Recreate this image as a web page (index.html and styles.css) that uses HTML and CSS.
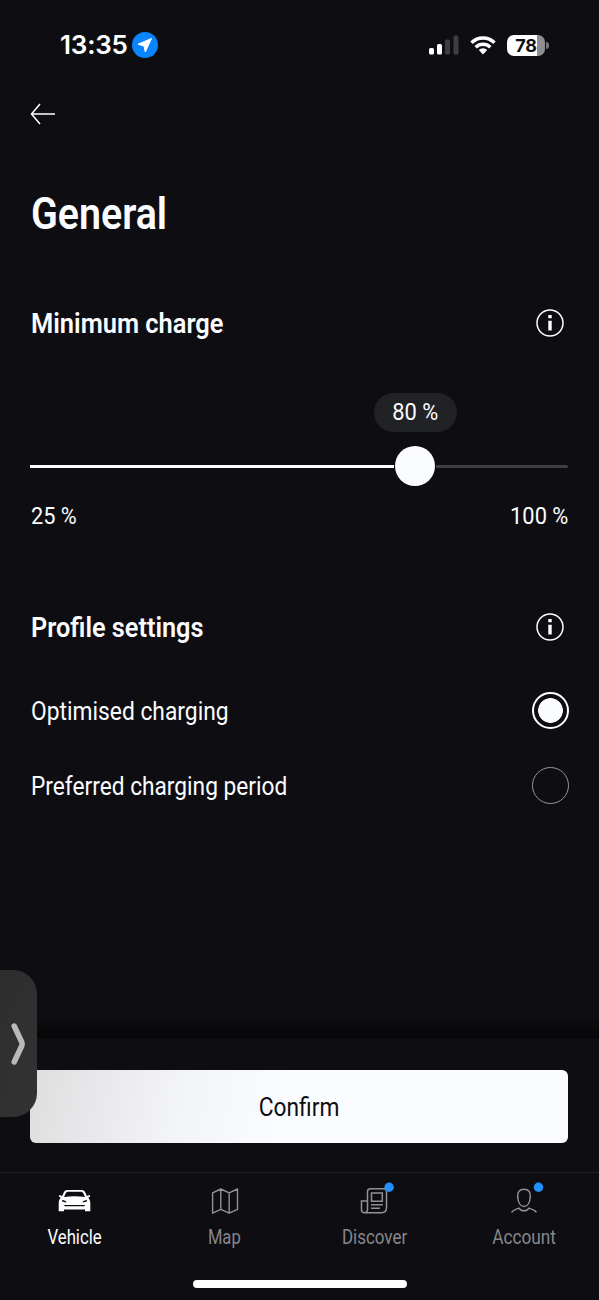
FILE: index.html
```html
<!DOCTYPE html>
<html lang="en">
<head>
<meta charset="utf-8">
<title>General</title>
<link rel="stylesheet" href="styles.css">
</head>
<body>
<div class="screen">
  <header class="status">
    <div class="status-left">
      <span class="time">13:35</span>
      <svg class="location" viewBox="0 0 26 26"><circle cx="13" cy="13" r="13" fill="#0a84ff"/><path d="M19.500 6.500 6 12.200 12 14 13.300 20Z" fill="#fff" stroke="#fff" stroke-width="1" stroke-linejoin="round"/></svg>
    </div>
    <div class="status-right">
      <svg class="signal" viewBox="0 0 30 20"><rect y="13" width="5" height="6.5" rx="1.5" fill="#fff"/><rect x="8" y="9" width="5" height="10.5" rx="1.5" fill="#fff"/><rect x="16" y="4.500" width="5" height="15" rx="1.500" fill="#3e3e42"/><rect x="24.500" y="0.500" width="5" height="19" rx="1.500" fill="#3e3e42"/></svg>
      <svg class="wifi" viewBox="0 0 26 20"><g fill="none" stroke="#fff" stroke-width="3.500"><path d="M1.500 7.700a16.300 16.300 0 0 1 23 0"/><path d="M5.700 12.200a10.400 10.400 0 0 1 14.600 0"/></g><path d="M8.800 15a6 6 0 0 1 8.400 0L13 19.500Z" fill="#fff"/></svg>
      <div class="battery"><span class="level">78</span><i class="nub"></i></div>
    </div>
  </header>

  <nav class="topbar">
    <svg class="back" viewBox="0 0 26 22" fill="none" stroke="#fff" stroke-width="1.500"><path d="M25 11H1.500M10 1 1.500 11 10 21"/></svg>
  </nav>

  <main class="content">
    <h1 class="title"><span class="t t-title">General</span></h1>

    <section class="row heading-row charge-heading">
      <h2 class="heading"><span class="t t-min">Minimum charge</span></h2>
      <svg class="info" viewBox="0 0 28 28"><circle cx="14" cy="14" r="13" fill="none" stroke="#fff" stroke-width="1.500"/><path d="M12.300 6h3.400v3.200h-3.400zM12.300 11.700h3.400v9.800h-3.400z" fill="#fff"/></svg>
    </section>

    <section class="slider">
      <div class="bubble"><span class="t t-80">80 %</span></div>
      <div class="track"><div class="fill"></div><div class="thumb"></div><div class="rest"></div></div>
      <div class="row scale"><span class="t t-25">25 %</span><span class="t t-100">100 %</span></div>
    </section>

    <section class="row heading-row profile-heading">
      <h2 class="heading"><span class="t t-profile">Profile settings</span></h2>
      <svg class="info" viewBox="0 0 28 28"><circle cx="14" cy="14" r="13" fill="none" stroke="#fff" stroke-width="1.500"/><path d="M12.300 6h3.400v3.200h-3.400zM12.300 11.700h3.400v9.800h-3.400z" fill="#fff"/></svg>
    </section>

    <div class="row option"><span class="t t-opt">Optimised charging</span><i class="radio checked"></i></div>
    <div class="row option"><span class="t t-pref">Preferred charging period</span><i class="radio"></i></div>
  </main>

  <footer class="actions"><button class="confirm"><span class="t t-confirm">Confirm</span></button></footer>

  <nav class="tabs">
    <a class="tab active">
      <svg class="tab-icon" viewBox="0 0 36 30"><path fill="#fff" fill-rule="evenodd" d="M10.500 4h14c2 0 3 .8 3.800 2.500l1.600 3.500 2.500-1 1 1.300-2.100 1.400c1.400 1.500 2 3 2 5.500V25.300h-5.300v-1.700H7V25.300H1.700v-8.100c0-2.500.6-4 2-5.500L1.600 10.300 2.600 9l2.500 1 1.600-3.500C7.500 4.800 8.500 4 10.500 4Zm.6 1.700c-1.300 0-1.900.5-2.500 1.700L7 11q10.500-1.400 21 0l-1.600-3.600c-.6-1.200-1.200-1.700-2.500-1.700ZM4.800 13.700l.8 2 4 .8-.9-1.500Zm25.400 0-3.900 1.300-.9 1.500 4-.8ZM6.500 18.900l1.500 1.400h19l1.500-1.400Z"/></svg>
      <span class="t t-vehicle">Vehicle</span>
    </a>
    <a class="tab">
      <svg class="tab-icon" viewBox="0 0 36 30" fill="none" stroke="#929296" stroke-width="1.400" stroke-linejoin="round"><path d="m5.600 6.800 8.200-3.800 8.400 3.800 8.300-3.800v20.300l-8.300 3.900-8.400-3.900-8.200 3.900ZM13.800 3v20.300M22.200 6.800v20.300"/></svg>
      <span class="t t-map">Map</span>
    </a>
    <a class="tab">
      <svg class="tab-icon" viewBox="0 0 36 30" fill="none" stroke="#929296" stroke-width="1.500"><path d="M11.500 24V5.500Q11.500 2.700 14.500 2.700H27.500Q30.500 2.700 30.500 5.500V21.500Q30.500 26.700 25.500 26.700H8.500Q5.500 26.700 5.500 24V15H11.500M11.500 23q0 3.700-3 3.700M15.500 7h10.800v8.300H15.500ZM15 18.800h11.800M15 22.300h9"/><circle cx="33.100" cy="1.200" r="4.700" fill="#2490ff" stroke="none"/></svg>
      <span class="t t-discover">Discover</span>
    </a>
    <a class="tab">
      <svg class="tab-icon" viewBox="0 0 36 30" fill="none" stroke="#929296" stroke-width="1.500"><path d="M18 3.300c4.500 0 6.700 2.500 6.300 7.500-.4 6-3 9.800-6.300 9.800s-5.900-3.800-6.300-9.800C11.300 5.800 13.500 3.300 18 3.300ZM5.500 26.300c2-2.300 4.500-3.200 7.500-4.200 1 1.800 2.700 2.700 5 2.700s4-.9 5-2.700c3 1 5.500 1.900 7.500 4.200"/><circle cx="32.500" cy="1.200" r="4.700" fill="#2490ff" stroke="none"/></svg>
      <span class="t t-account">Account</span>
    </a>
  </nav>
  <div class="home"></div>
  <aside class="drawer"><svg class="chevron" viewBox="0 0 15 42" fill="none" stroke="#b9b9bc" stroke-width="5.500" stroke-linecap="round" stroke-linejoin="round"><path d="m3.200 3 7.500 16q.8 2 0 4L3.200 39"/></svg></aside>
</div>
</body>
</html>
```

FILE: styles.css
```css
* { box-sizing: border-box; }
body { margin: 0; background: #0e0e12; color: #fbfcff; font-family: Roboto, "Liberation Sans", sans-serif; }
.screen { position: relative; width: 599px; height: 1300px; overflow: hidden; display: flex; flex-direction: column; }

.status { height: 90px; padding: 0 50px 0 60px; display: flex; justify-content: space-between; align-items: center; }
.status-left, .status-right { display: flex; align-items: center; }
.status-left { gap: 4px; }
.time { font: 600 26px/30px Inter, sans-serif; letter-spacing: -0.200px; color: #fff; }
.location { width: 26px; height: 26px; }
.signal { width: 30px; height: 20px; margin-right: 11px; }
.wifi { width: 26px; height: 20px; margin-right: 11px; }
.battery { position: relative; width: 38px; height: 21px; border-radius: 7px; background: linear-gradient(90deg, #fff 30px, #8e8e91 30px); margin-right: 4px; }
.level { display: block; text-align: center; font: 700 18px/21px Inter, sans-serif; letter-spacing: -0.3px; color: #0e0e12; }
.nub { position: absolute; right: -4px; top: 7px; width: 3px; height: 7px; border-radius: 0 4px 4px 0; background: #77777b; }

.topbar { height: 48px; padding: 13px 30px; }
.back { display: block; width: 26px; height: 22px; }

.content { height: 900px; padding: 0 31px 0 30px; }
.t { display: inline-block; white-space: pre; transform-origin: left center; }
.title { margin: 48px 0 0 1px; font-size: 45px; line-height: 56px; font-weight: 600; }
.row { display: flex; justify-content: space-between; align-items: center; }
.heading-row { height: 40px; }
.charge-heading { margin-top: 61px; }
.heading { margin: 1px 0 0 1px; font-size: 28px; line-height: 40px; font-weight: 600; }
.info { width: 28px; height: 28px; margin-right: 4px; }

.slider { padding-top: 50px; }
.bubble { width: 83px; height: 39px; margin-left: 344px; border-radius: 20px; background: #212226; font-size: 23px; line-height: 40px; text-align: center; }
.track { display: flex; align-items: center; height: 40px; margin-top: 14px; }
.fill { width: 364px; height: 3px; background: #fbfcff; }
.thumb { width: 40px; height: 40px; margin: 0 1px; border-radius: 50%; background: #fbfcff; }
.rest { flex: 1; height: 3px; border-radius: 0 2px 2px 0; background: #3e3e43; }
.scale { margin-top: 15px; padding-left: 1px; height: 30px; font-size: 23px; }

.profile-heading { margin-top: 76px; }
.option { height: 75px; margin-right: -1px; padding-left: 1px; font-size: 26px; }
.profile-heading + .option { margin-top: 26px; }
.radio { width: 37px; height: 37px; border: 1.500px solid #96969a; border-radius: 50%; }
.checked { border: 2px solid #fff; background: radial-gradient(circle, #fbfcff 12px, transparent 12.700px); }

.actions { position: relative; height: 135px; padding: 32px 31px 0 30px; border-bottom: 1px solid #202024; }
.actions::before { content: ""; position: absolute; left: 0; right: 0; top: -22px; height: 22px; background: linear-gradient(transparent, #060608); }
.confirm { display: flex; justify-content: center; align-items: center; width: 100%; height: 73px; padding: 0; border: 0; border-radius: 6px; background: linear-gradient(100deg, #dededf, #f3f4f7 28%, #fbfcff 48%); color: #0e0e12; font: 400 26px/40px Roboto, sans-serif; }

.tabs { display: flex; height: 94px; padding-top: 13px; }
.tab { flex: 1; display: flex; flex-direction: column; align-items: center; color: #87878b; font-size: 19.500px; line-height: 26px; }
.active { color: #fbfcff; }
.tab-icon { width: 36px; height: 30px; margin-bottom: 9px; overflow: visible; }
.home { width: 214px; height: 8px; margin: 13px 0 0 193px; border-radius: 4px; background: #fff; }

.drawer { position: absolute; left: 0; top: 970px; width: 37px; height: 147px; border-radius: 0 24px 24px 0; background: linear-gradient(115deg, #2d2d2e, #333334); }
.chevron { position: absolute; left: 11px; top: 53px; width: 15px; height: 42px; }

/* Condensed letterforms, tuned per label */
.t-80, .t-confirm, .tab .t { transform-origin: center; }
.t-100 { transform-origin: right center; }
.t-title { transform: scaleX(.875); }
.t-min { transform: scaleX(.908); }
.t-profile { transform: scaleX(.903); }
.t-80 { transform: scaleX(.95); }
.t-25 { transform: scaleX(.945); }
.t-100 { transform: scaleX(.95); }
.t-opt { transform: scaleX(.877); }
.t-pref { transform: scaleX(.873); }
.t-confirm { transform: scaleX(.875); }
.t-vehicle { transform: scaleX(.86); }
.t-map { transform: scaleX(.85); }
.t-discover { transform: scaleX(.87); }
.t-account { transform: scaleX(.885); }
```
